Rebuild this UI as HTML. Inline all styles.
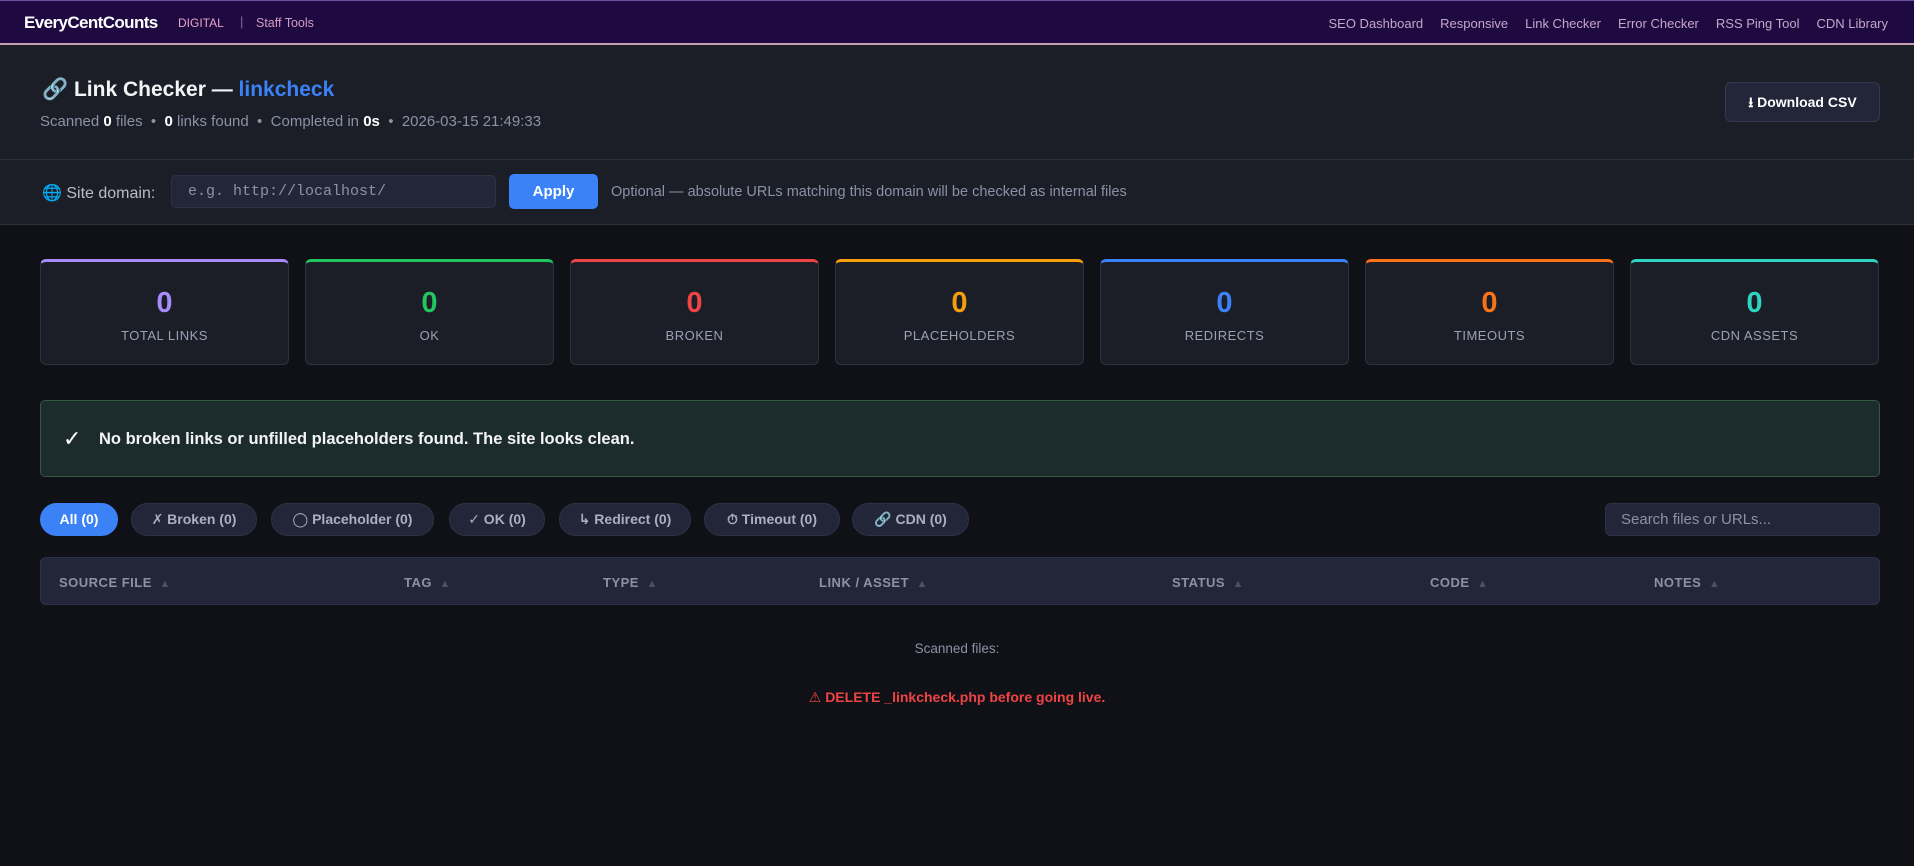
<!DOCTYPE html>
<html><head><meta charset="utf-8"><style>
*{box-sizing:border-box;margin:0;padding:0}
body{width:1914px;height:866px;overflow:hidden;background:#0f1117;font-family:"Liberation Sans","DejaVu Sans",sans-serif;color:#e5e7eb;position:relative}
.nav{position:absolute;left:0;top:0;width:1914px;height:45px;background:#1e0940;border-bottom:2px solid #c9a0b0;border-top:1px solid #6b4fa0}
.nav .logo{position:absolute;left:24px;top:12px;font-weight:bold;font-size:17px;color:#fff;letter-spacing:-0.6px}
.nav .dig{position:absolute;left:178px;top:15px;font-size:12px;color:#e8a6c8}
.nav .sep{position:absolute;left:240px;top:13px;font-size:13px;color:#8a6a9a}
.nav .st{position:absolute;left:256px;top:15px;font-size:12.5px;color:#d49cc0}
.nav .links{position:absolute;right:26px;top:15px;font-size:13px;color:#c4a8c8}
.nav .links span{margin-left:17px}
.hdr{position:absolute;left:0;top:45px;width:1914px;height:115px;background:#1b1d27;border-bottom:1px solid #2c2f3d}
.title{position:absolute;left:42px;top:33px;font-size:21px;font-weight:bold;color:#f3f4f6}
.title b{color:#3b82f6}
.sub{position:absolute;left:40px;top:68px;font-size:15px;color:#8b92a5}
.sub b{color:#fff}
.dl{position:absolute;left:1725px;top:37px;width:155px;height:40px;background:#232638;border:1px solid #343850;border-radius:6px;color:#fff;font-weight:bold;font-size:14px;text-align:center;line-height:38px}
.dom{position:absolute;left:0;top:160px;width:1914px;height:65px;background:#1b1d27;border-bottom:1px solid #2c2f3d}
.dom .lb{position:absolute;left:42px;top:23px;font-size:16px;color:#b8bdc9}
.dom .in{position:absolute;left:171px;top:15px;width:325px;height:33px;background:#232638;border:1px solid #2e3246;border-radius:5px;font-family:"Liberation Mono",monospace;font-size:15px;color:#8b92a5;padding:7px 16px}
.dom .ap{position:absolute;left:509px;top:14px;width:89px;height:35px;background:#3b82f6;border-radius:5px;color:#fff;font-weight:bold;font-size:15px;text-align:center;line-height:35px}
.dom .opt{position:absolute;left:611px;top:24px;font-size:14.5px;color:#8b92a5}
.card{position:absolute;top:259px;width:249px;height:106px;background:#1b1d27;border:1px solid #2e3142;border-radius:6px;border-top:3px solid;text-align:center}
.card .n{margin-top:25px;font-size:29px;font-weight:bold;line-height:32px}
.card .l{margin-top:9px;font-size:13px;color:#9aa1b3;letter-spacing:.5px}
.ok{position:absolute;left:40px;top:400px;width:1840px;height:77px;background:#1c2b2b;border:1px solid #2e5a44;border-radius:5px}
.ok span{position:absolute;left:58px;top:29px;font-size:16.5px;font-weight:bold;color:#f3f4f6}
.ok i{position:absolute;left:22px;top:25px;font-size:22px;font-style:normal;color:#fff}
.pill{position:absolute;top:503px;height:33px;border-radius:17px;background:#232638;border:1px solid #2e3246;color:#aab0c0;font-size:14px;font-weight:bold;text-align:center;line-height:31px}
.search{position:absolute;left:1605px;top:503px;width:275px;height:33px;background:#232638;border:1px solid #2e3246;border-radius:6px;color:#8b92a5;font-size:15px;padding:7px 15px}
.th{position:absolute;left:40px;top:557px;width:1840px;height:48px;background:#232638;border:1px solid #2e3246;border-radius:6px}
.th span{position:absolute;top:17px;font-size:13px;font-weight:bold;color:#8b92a5;letter-spacing:.5px}
.th span:after{content:" \25B2";color:#4b5063;font-size:11px;margin-left:4px}
.sc{position:absolute;left:0;width:1914px;top:641px;text-align:center;font-size:13.5px;color:#8b92a5}
.wr{position:absolute;left:0;width:1914px;top:689px;text-align:center;font-size:14px;font-weight:bold;color:#ef4444}
</style></head><body>
<div class="nav"><div class="logo">EveryCentCounts</div><div class="dig">DIGITAL</div><div class="sep">|</div><div class="st">Staff Tools</div>
<div class="links"><span>SEO Dashboard</span><span>Responsive</span><span>Link Checker</span><span>Error Checker</span><span>RSS Ping Tool</span><span>CDN Library</span></div></div>
<div class="hdr"><div class="title">🔗 Link Checker — <b>linkcheck</b></div>
<div class="sub">Scanned <b>0</b> files &nbsp;•&nbsp; <b>0</b> links found &nbsp;•&nbsp; Completed in <b>0s</b> &nbsp;•&nbsp; 2026-03-15 21:49:33</div>
<div class="dl">⭳ Download CSV</div></div>
<div class="dom"><div class="lb"><span style="color:#4fb3e8">🌐</span> Site domain:</div><div class="in">e.g. http://localhost/</div><div class="ap">Apply</div>
<div class="opt">Optional — absolute URLs matching this domain will be checked as internal files</div></div>
<div class="card" style="left:40px;border-top-color:#a78bfa"><div class="n" style="color:#a78bfa">0</div><div class="l">TOTAL LINKS</div></div>
<div class="card" style="left:305px;border-top-color:#22c55e"><div class="n" style="color:#22c55e">0</div><div class="l">OK</div></div>
<div class="card" style="left:570px;border-top-color:#ef4444"><div class="n" style="color:#ef4444">0</div><div class="l">BROKEN</div></div>
<div class="card" style="left:835px;border-top-color:#f59e0b"><div class="n" style="color:#f59e0b">0</div><div class="l">PLACEHOLDERS</div></div>
<div class="card" style="left:1100px;border-top-color:#3b82f6"><div class="n" style="color:#3b82f6">0</div><div class="l">REDIRECTS</div></div>
<div class="card" style="left:1365px;border-top-color:#f97316"><div class="n" style="color:#f97316">0</div><div class="l">TIMEOUTS</div></div>
<div class="card" style="left:1630px;border-top-color:#2dd4bf"><div class="n" style="color:#2dd4bf">0</div><div class="l">CDN ASSETS</div></div>
<div class="ok"><i>✓</i><span>No broken links or unfilled placeholders found. The site looks clean.</span></div>
<div class="pill" style="left:40px;width:78px;background:#3b82f6;border-color:#3b82f6;color:#fff">All (0)</div>
<div class="pill" style="left:131px;width:126px">✗ Broken (0)</div>
<div class="pill" style="left:271px;width:163px">◯ Placeholder (0)</div>
<div class="pill" style="left:449px;width:96px">✓ OK (0)</div>
<div class="pill" style="left:559px;width:132px">↳ Redirect (0)</div>
<div class="pill" style="left:704px;width:136px">⏱ Timeout (0)</div>
<div class="pill" style="left:852px;width:117px">🔗 CDN (0)</div>
<div class="search">Search files or URLs...</div>
<div class="th"><span style="left:18px">SOURCE FILE</span><span style="left:363px">TAG</span><span style="left:562px">TYPE</span><span style="left:778px">LINK / ASSET</span><span style="left:1131px">STATUS</span><span style="left:1389px">CODE</span><span style="left:1613px">NOTES</span></div>
<div class="sc">Scanned files:</div>
<div class="wr">⚠ DELETE _linkcheck.php before going live.</div>
</body></html>
